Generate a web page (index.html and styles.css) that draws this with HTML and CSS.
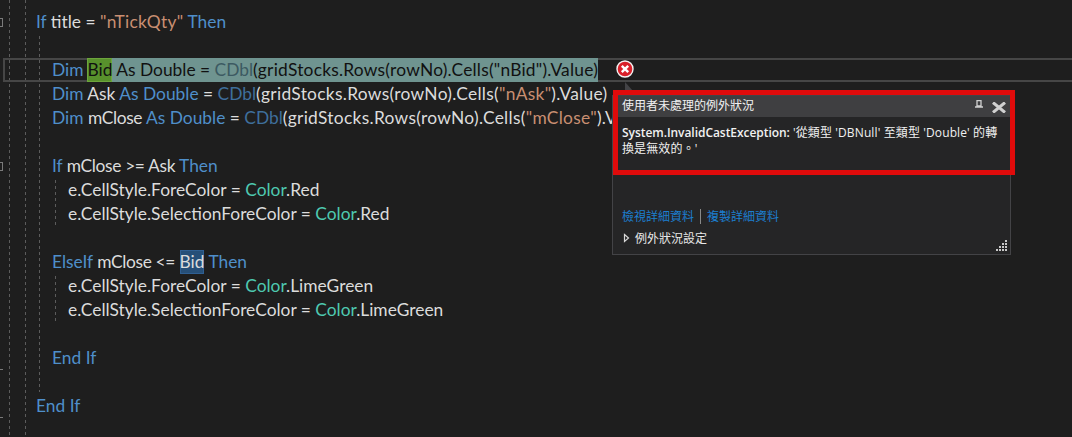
FILE: index.html
```html
<!DOCTYPE html>
<html lang="zh-Hant">
<head>
<meta charset="utf-8">
<title>Exception</title>
<link rel="stylesheet" href="styles.css">
</head>
<body>
<main class="editor">
  <i class="guide g1"></i><i class="guide g2"></i><i class="guide g3"></i>
  <i class="guide g4 a"></i><i class="guide g4 b"></i>
  <i class="fold f1"></i><i class="fold f2"></i><i class="tick t1"></i><i class="tick t2"></i>
  <div class="code">
    <div class="line i0"><span class="k">If</span> title = <span class="s">"nTickQty"</span> <span class="k">Then</span></div>
    <div class="line i1"></div>
    <div class="line i1 current"><span class="k">Dim</span> <span class="sel"><span class="hl">Bid</span> As Double = <span class="dim">CDbl</span><span class="call-sel">(gridStocks.Rows(rowNo).Cells("nBid").Value)</span></span><svg class="err" width="18" height="18" viewBox="0 0 18 18"><circle cx="9" cy="9" r="8" fill="#d9202a" stroke="#f3f3f3" stroke-width="1.4"/><path d="M5.8 5.8l6.4 6.4M12.2 5.8l-6.4 6.4" stroke="#fff" stroke-width="2.4"/></svg></div>
    <div class="line i1"><span class="k">Dim</span> Ask <span class="k">As Double</span> = <span class="c">CDbl</span><span class="call">(gridStocks.Rows(rowNo).Cells(<span class="s">"nAsk"</span>).Value)</span></div>
    <div class="line i1"><span class="k">Dim</span> <span class="tight">mClose</span> <span class="k">As Double</span> = <span class="c">CDbl</span><span class="call">(gridStocks.Rows(rowNo).Cells(<span class="s">"mClose"</span>).Value)</span></div>
    <div class="line i1"></div>
    <div class="line i1"><span class="k">If</span> <span class="tight">mClose &gt;= Ask</span> <span class="k">Then</span></div>
    <div class="line i2">e.CellStyle.ForeColor = <span class="t">Color</span>.Red</div>
    <div class="line i2">e.CellStyle.SelectionForeColor = <span class="t">Color</span>.Red</div>
    <div class="line i1"></div>
    <div class="line i1"><span class="k">ElseIf</span> <span class="tight">mClose &lt;=</span> <span class="ref">Bid</span> <span class="k">Then</span></div>
    <div class="line i2">e.CellStyle.ForeColor = <span class="t">Color</span>.LimeGreen</div>
    <div class="line i2">e.CellStyle.SelectionForeColor = <span class="t">Color</span>.LimeGreen</div>
    <div class="line i1"></div>
    <div class="line i1"><span class="k">End If</span></div>
    <div class="line i1"></div>
    <div class="line i0"><span class="k">End If</span></div>
  </div>
  <i class="beak"></i>
  <section class="popup">
    <header class="pop-head">
      <span class="pop-title">使用者未處理的例外狀況</span>
      <svg class="pin" width="8" height="8" viewBox="0 0 8 8"><path d="M2 .5h4v5.5H2zM0 7h8" fill="none" stroke="#d0d0d0" stroke-width="1.3"/></svg>
      <svg class="close" width="14" height="11" viewBox="0 0 14 11"><path d="M1 .5l12 10M13 .5l-12 10" stroke="#d0d0d0" stroke-width="3"/></svg>
    </header>
    <div class="pop-body">
      <p class="msg"><b>System.InvalidCastException:</b> <span class="rest">'從類型 'DBNull' 至類型 'Double' 的轉換是無效的。'</span></p>
      <div class="links"><a>檢視詳細資料</a><span class="bar"></span><a>複製詳細資料</a></div>
      <div class="settings"><svg class="tri" width="7" height="10" viewBox="0 0 7 10"><path d="M1.5 1.5l4 3.5-4 3.5z" fill="none" stroke="#d8d8d8" stroke-width="1.2"/></svg>例外狀況設定</div>
    </div>
    <svg class="grip" width="12" height="12" viewBox="0 0 12 12" fill="#c8c8c8"><path d="M9 0h2v2H9zM6 3h2v2H6zM9 3h2v2H9zM3 6h2v2H3zM6 6h2v2H6zM9 6h2v2H9zM0 9h2v2H0zM3 9h2v2H3zM6 9h2v2H6zM9 9h2v2H9z"/></svg>
  </section>
  <div class="redbox"></div>
</main>
</body>
</html>
```
FILE: styles.css
```css
html, body { margin: 0; padding: 0; background: #1e1e1e; }
.editor {
  position: relative;
  width: 1072px;
  height: 437px;
  overflow: hidden;
  background: #1e1e1e;
  color: #dcdcdc;
  font-family: "Lato", "Liberation Sans", sans-serif;
  font-size: 17.36px;
}
.code { padding-top: 10px; position: relative; }
.line { height: 24px; line-height: 24px; white-space: pre; box-sizing: border-box; }
.i0 { padding-left: 36px; }
.i1 { padding-left: 52px; }
.i2 { padding-left: 68px; }
.current {
  margin: 0 -4px 0 3px;
  padding-left: 47px;
  border: 2px solid #464646;
  line-height: 20px;
  display: flex;
  align-items: center;
}
.current .k { margin-right: 4px; }
.k { color: #4f8fca; }
.s { color: #c98f72; letter-spacing: 0.3px; }
.t { color: #4ec9b0; }
.c { color: #3f6f9c; }
.call { letter-spacing: 0.3px; }
.call-sel { letter-spacing: 0.23px; }
.tight { letter-spacing: -0.35px; }
.sel {
  display: inline-block;
  height: 24px;
  line-height: 24px;
  margin: -2px 0;
  background: #6f9490;
  color: #111;
}
.dim { color: #3c5a62; }
.hl {
  display: inline-block;
  height: 24px;
  background: #58912c;
  box-shadow: inset 0 0 0 1px #6da53c;
}
.err { margin: -2px 0 0 18px; flex: none; }
.ref {
  display: inline-block;
  height: 24px;
  background: #264f78;
  box-shadow: inset 0 0 0 1px #2f5f92;
}
.guide {
  position: absolute;
  width: 1px;
  background: repeating-linear-gradient(to bottom, #5c5c5c 0 3px, transparent 3px 6px);
}
.g1 { left: 9px; top: 0; height: 437px; }
.g2 { left: 25px; top: 0; height: 437px; }
.g3 { left: 39px; top: 36px; height: 356px; }
.g4 { left: 55px; }
.a { top: 180px; height: 46px; }
.b { top: 276px; height: 46px; }
.fold { position: absolute; left: -6px; width: 7px; height: 7px; border: 1px solid #7a7a7a; }
.f1 { top: 18px; }
.f2 { top: 162px; }
.tick { position: absolute; left: 0; width: 3px; height: 1px; background: #7a7a7a; }
.t1 { top: 369px; }
.t2 { top: 417px; }
.beak {
  position: absolute;
  left: 625px;
  top: 82px;
  width: 0;
  height: 0;
  border-right: 8px solid transparent;
  border-bottom: 9px solid #434346;
}
.popup {
  position: absolute;
  left: 612px;
  top: 95px;
  width: 399px;
  height: 160px;
  box-sizing: border-box;
  border: 1px solid #434346;
  background: #252526;
  color: #f1f1f1;
  font-family: "Open Sans", "Noto Sans CJK TC", sans-serif;
  font-size: 12px;
}
.pop-head {
  height: 21px;
  box-sizing: border-box;
  background: #3f3f41;
  display: flex;
  align-items: center;
  padding: 0 4px 4px 9px;
}
.pop-title { flex: 1; font-family: "Noto Sans CJK TC", sans-serif; }
.pin { margin-right: 9px; margin-top: -1px; }
.close { margin: 5px 0 0 0; }
.pop-body { padding: 8px 9px 0; }
.msg { margin: 0; height: 80px; line-height: 16px; width: 381px; }
.msg b { font-weight: 600; letter-spacing: -0.05px; }
.rest { letter-spacing: 0.12px; }
.links { display: flex; align-items: center; height: 22px; }
.links a { color: #1c7fd0; }
.bar { width: 1px; height: 15px; margin: 0 6px; background: #8a8a8a; }
.settings { display: flex; align-items: center; height: 22px; color: #e8e8e8; }
.tri { margin: 0 5px 0 1px; }
.grip { position: absolute; right: 2px; bottom: 2px; }
.redbox {
  position: absolute;
  left: 613px;
  top: 90px;
  width: 402px;
  height: 85px;
  box-sizing: border-box;
  border: 5px solid #e00b0b;
}
```
